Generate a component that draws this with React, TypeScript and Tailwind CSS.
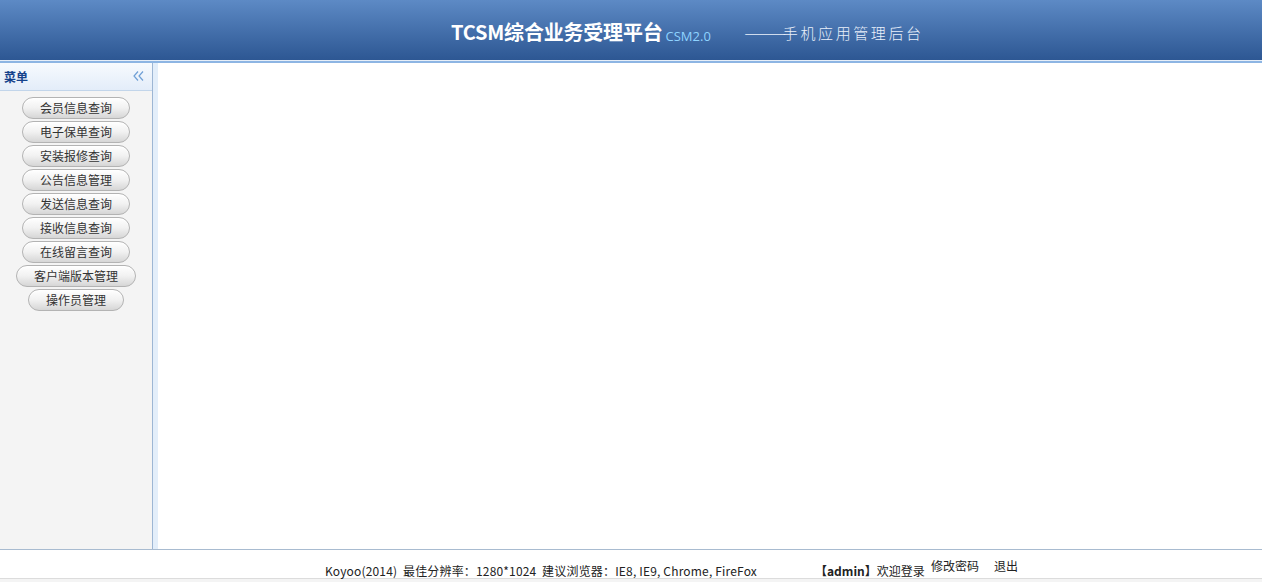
import React from "react";

const menu = [
  "会员信息查询",
  "电子保单查询",
  "安装报修查询",
  "公告信息管理",
  "发送信息查询",
  "接收信息查询",
  "在线留言查询",
  "客户端版本管理",
  "操作员管理",
];

const font = { fontFamily: '"Noto Sans CJK SC", "Noto Sans", sans-serif' };

export default function App() {
  return (
    <div className="w-[1262px] h-[582px] flex flex-col bg-white overflow-hidden" style={font}>
      {/* header */}
      <div className="h-[60px] shrink-0 bg-gradient-to-b from-[#5d8ac5] to-[#2d5793] flex items-center justify-start pl-[451px]">
        <div className="flex items-end pt-[4px]">
          <span className="text-[20px] font-bold text-white leading-[24px] tracking-[-0.2px]">TCSM综合业务受理平台</span>
          <span className="text-[13px] text-[#8fd3ff] leading-[14px] ml-[3px] mb-[1px] font-['Open_Sans',sans-serif]">CSM2.0</span>
          <span className="text-[15px] text-[#eaf0fa] leading-[20px] ml-[33px] mb-[1px] font-light flex items-center">
            <span className="inline-block w-[39px] whitespace-nowrap">
              <span className="inline-block origin-left scale-x-[1.7]">——</span>
            </span>
            <span className="tracking-[2.6px]">手机应用管理后台</span>
          </span>
        </div>
      </div>
      <div className="h-px shrink-0 bg-[#e6eef8]" />
      <div className="h-[2px] shrink-0 bg-[#8db5e3]" />

      {/* body */}
      <div className="flex h-[487px] shrink-0 border-b border-[#a8bbd0]">
        <div className="w-[153px] shrink-0 bg-[#f4f4f4] border-r border-[#9db6d4] flex flex-col">
          <div className="h-[28px] shrink-0 bg-gradient-to-b from-[#f7fafe] to-[#e3edf9] border-b border-[#c2d5ea] flex items-center justify-between pl-[4px] pr-[8px]">
            <span className="text-[12px] font-bold text-[#15428b]">菜单</span>
            <svg width="11" height="12" viewBox="0 0 11 12" className="-mt-[1px]">
              <path d="M5 1.5 L1 6 L5 10.5 M10 1.5 L6 6 L10 10.5" fill="none" stroke="#6f9fd6" strokeWidth="1.2" />
            </svg>
          </div>
          <div className="flex flex-col items-center pt-[6px] gap-[2px]">
            {menu.map((m) => (
              <div
                key={m}
                className="h-[22px] px-[17px] rounded-full border border-[#b3b3b3] bg-gradient-to-b from-[#ffffff] via-[#f1f1f1] to-[#d6d6d6] flex items-center text-[12px] text-[#333] shadow-[inset_0_1px_0_#fff] leading-none"
              >
                {m}
              </div>
            ))}
          </div>
        </div>
        <div className="w-[5px] shrink-0 bg-[#e3eefa]" />
        <div className="flex-1 bg-white" />
      </div>

      {/* footer */}
      <div className="h-[28px] shrink-0 bg-white relative text-[12px] text-[#222]">
        <div className="absolute left-[325px] top-[13px] leading-[16px] whitespace-pre tracking-[0.17px]">
          Koyoo(2014)  最佳分辨率：1280*1024  建议浏览器：IE8, IE9, Chrome, FireFox
        </div>
        <div className="absolute left-[815px] top-[13px] leading-[16px] whitespace-pre">
          <span className="font-bold">【admin】</span>欢迎登录
        </div>
        <div className="absolute left-[931px] top-[8px] leading-[16px]">修改密码</div>
        <div className="absolute left-[994px] top-[8px] leading-[16px]">退出</div>
      </div>
      <div className="h-px shrink-0 bg-[#dcdcdc]" />
      <div className="flex-1 bg-[#f4f4f4]" />
    </div>
  );
}
